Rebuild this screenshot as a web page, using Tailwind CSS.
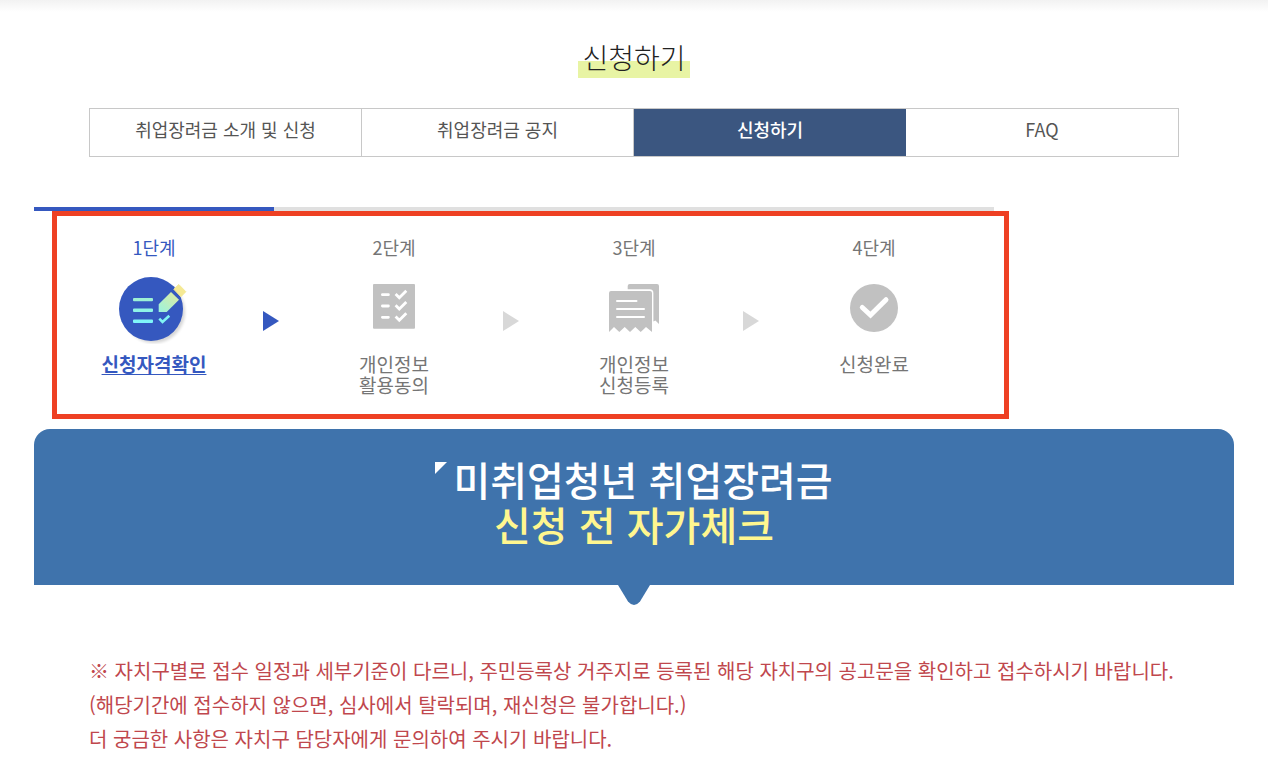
<!DOCTYPE html>
<html lang="ko">
<head>
<meta charset="utf-8">
<meta name="viewport" content="width=device-width, initial-scale=1">
<title>신청하기</title>
<script src="https://cdn.jsdelivr.net/npm/@tailwindcss/browser@4"></script>
</head>
<body class="bg-white font-['Noto_Sans_CJK_KR',sans-serif] text-[#555]">
<div class="h-3 bg-linear-to-b from-[#f2f2f2] to-white"></div>
<main class="mx-auto max-w-[1200px]">
  <header class="flex justify-center pt-6">
    <h1 class="bg-linear-to-t from-[#e8f4a4] from-40% to-transparent to-40% px-1 text-[28px] leading-[42px] font-light text-[#222]">신청하기</h1>
  </header>

  <nav class="mx-[55px] mt-[30px] grid grid-cols-4 border border-[#c8c8c8] text-center text-lg leading-[41px]" aria-label="취업장려금">
    <a href="#" class="border-r border-[#c8c8c8] pb-1.5">취업장려금 소개 및 신청</a>
    <a href="#" class="border-r border-[#c8c8c8] pb-1.5">취업장려금 공지</a>
    <a href="#" class="bg-[#3b5680] pb-1.5 font-medium text-white" aria-current="page">신청하기</a>
    <a href="#" class="pb-1.5">FAQ</a>
  </nav>

  <section class="relative mt-[50px] max-w-[960px] pb-[34px]">
    <div class="h-1 bg-[#e0e0e0]"><div class="h-1 w-1/4 bg-[#3558bf]"></div></div>
    <ol class="grid grid-cols-4 pt-[22px] text-center text-[19px] leading-[21px] text-[#757575]">
      <li class="relative flex flex-col items-center text-[#3558bf]">
        <span class="text-lg leading-7">1단계</span>
        <svg class="mt-[11px] size-[72px]" viewBox="0 0 72 72" fill="none" aria-hidden="true">
          <defs>
            <linearGradient id="pen" x1="66" y1="12" x2="42" y2="40" gradientUnits="userSpaceOnUse"><stop stop-color="#fbe68a"/><stop offset="1" stop-color="#9cf3dc"/></linearGradient>
            <linearGradient id="rows" x1="0" y1="26" x2="0" y2="51" gradientUnits="userSpaceOnUse"><stop stop-color="#9ff0d2"/><stop offset="1" stop-color="#7df6fb"/></linearGradient>
            <filter id="soft" x="-20%" y="-20%" width="140%" height="140%"><feGaussianBlur stdDeviation="1.5"/></filter>
          </defs>
          <circle cx="36" cy="40" r="31" fill="#000" opacity=".16" filter="url(#soft)"/>
          <circle cx="33" cy="37" r="32" fill="#3558bf"/>
          <path fill="url(#rows)" d="M16 26h18a1 1 0 0 1 1 1v1.3a1 1 0 0 1-1 1H16a1 1 0 0 1-1-1V27a1 1 0 0 1 1-1zM16 36.6h18a1 1 0 0 1 1 1v1.3a1 1 0 0 1-1 1H16a1 1 0 0 1-1-1v-1.3a1 1 0 0 1 1-1zM16 47.6h18a1 1 0 0 1 1 1v1.3a1 1 0 0 1-1 1H16a1 1 0 0 1-1-1v-1.3a1 1 0 0 1 1-1z"/>
          <path fill="url(#pen)" d="M40.7 32.3 53 20l8 7.7L48.7 40h-8z"/>
          <path fill="#f5e994" stroke="#f5e994" stroke-linejoin="round" d="m55.8 17.3 5-4.8 7 7.2-4.9 5z"/>
          <path stroke="#80f5f4" stroke-width="2.6" d="m41.3 46.7 3.2 3.2 6.8-6.2"/>
        </svg>
        <a href="#" class="mt-[9px] font-bold underline underline-offset-2" aria-current="step">신청자격확인</a>
        <svg class="absolute top-[78px] -right-[5px] h-5 w-4" viewBox="0 0 16 20" aria-hidden="true"><path fill="#3558bf" d="m0 0 16 10L0 20z"/></svg>
      </li>
      <li class="relative flex flex-col items-center">
        <span class="text-lg leading-7">2단계</span>
        <svg class="mt-[11px] size-[72px]" viewBox="0 0 72 72" fill="none" aria-hidden="true">
          <rect x="15" y="12" width="42" height="44.7" rx="1" fill="#c1c1c1"/>
          <path stroke="#fff" stroke-width="2.8" stroke-linecap="round" d="M24.4 22.7h6M24.4 34h6M24.4 45.3h6"/>
          <path stroke="#fff" stroke-width="2.8" d="m37.6 22 3.7 3.8 7-7M37.6 33.2l3.7 3.8 7-7M37.6 44.5l3.7 3.8 7-7"/>
        </svg>
        <span class="mt-[9px]">개인정보<br>활용동의</span>
        <svg class="absolute top-[78px] -right-[5px] h-5 w-4" viewBox="0 0 16 20" aria-hidden="true"><path fill="#d8d8d8" d="m0 0 16 10L0 20z"/></svg>
      </li>
      <li class="relative flex flex-col items-center">
        <span class="text-lg leading-7">3단계</span>
        <svg class="mt-[11px] size-[72px]" viewBox="0 0 72 72" fill="none" aria-hidden="true">
          <path fill="#c1c1c1" d="M29.7 17.3V14a2 2 0 0 1 2-2H59a2 2 0 0 1 2 2v38l-3.6-3.6-2 1V21a3.7 3.7 0 0 0-3.7-3.7z"/>
          <path fill="#c1c1c1" d="M11 21a2 2 0 0 1 2-2h39a2 2 0 0 1 2 2v39l-6-5-5.3 5-5.4-5-5.3 5-5.3-5-5.4 5-5.3-5-5 5z"/>
          <path stroke="#fff" stroke-width="2" stroke-linecap="round" d="M19 29h19.5M19 37h27M19 45h27"/>
        </svg>
        <span class="mt-[9px]">개인정보<br>신청등록</span>
        <svg class="absolute top-[78px] -right-[5px] h-5 w-4" viewBox="0 0 16 20" aria-hidden="true"><path fill="#d8d8d8" d="m0 0 16 10L0 20z"/></svg>
      </li>
      <li class="flex flex-col items-center">
        <span class="text-lg leading-7">4단계</span>
        <svg class="mt-[11px] size-[72px]" viewBox="0 0 72 72" fill="none" aria-hidden="true">
          <circle cx="36" cy="36" r="24" fill="#c1c1c1"/>
          <path stroke="#fff" stroke-width="5" stroke-linecap="round" d="m24.3 35.5 8.2 7.5L48 27.7"/>
        </svg>
        <span class="mt-[9px]">신청완료</span>
      </li>
    </ol>
    <div class="pointer-events-none absolute top-1 -right-[15px] bottom-[10px] left-[18px] border-5 border-[#ee4023]"></div>
  </section>

  <section class="relative rounded-t-2xl bg-[#3f73ac] pt-7 pb-[38px]">
    <h2 class="flex flex-col items-center text-[40px] leading-[45px] font-medium text-white">
      <span class="flex gap-1.5"><svg class="mt-[5px] size-3" viewBox="0 0 12 12" aria-hidden="true"><path fill="#fff" d="M0 0h12L0 12z"/></svg>미취업청년 취업장려금</span>
      <span class="text-[#fff68f]">신청 전 자가체크</span>
    </h2>
    <svg class="absolute top-full left-1/2 h-5 w-8 -translate-x-1/2" viewBox="0 0 32 20" aria-hidden="true"><path fill="#3f73ac" d="M0 0h32L22 16.5q-6 7-12 0z"/></svg>
  </section>

  <section class="mx-[55px] mt-[69px] text-xl leading-[34px] text-[#c0474d]">
    <p>※ 자치구별로 접수 일정과 세부기준이 다르니, 주민등록상 거주지로 등록된 해당 자치구의 공고문을 확인하고 접수하시기 바랍니다.</p>
    <p>(해당기간에 접수하지 않으면, 심사에서 탈락되며, 재신청은 불가합니다.)</p>
    <p>더 궁금한 사항은 자치구 담당자에게 문의하여 주시기 바랍니다.</p>
  </section>
</main>
</body>
</html>
